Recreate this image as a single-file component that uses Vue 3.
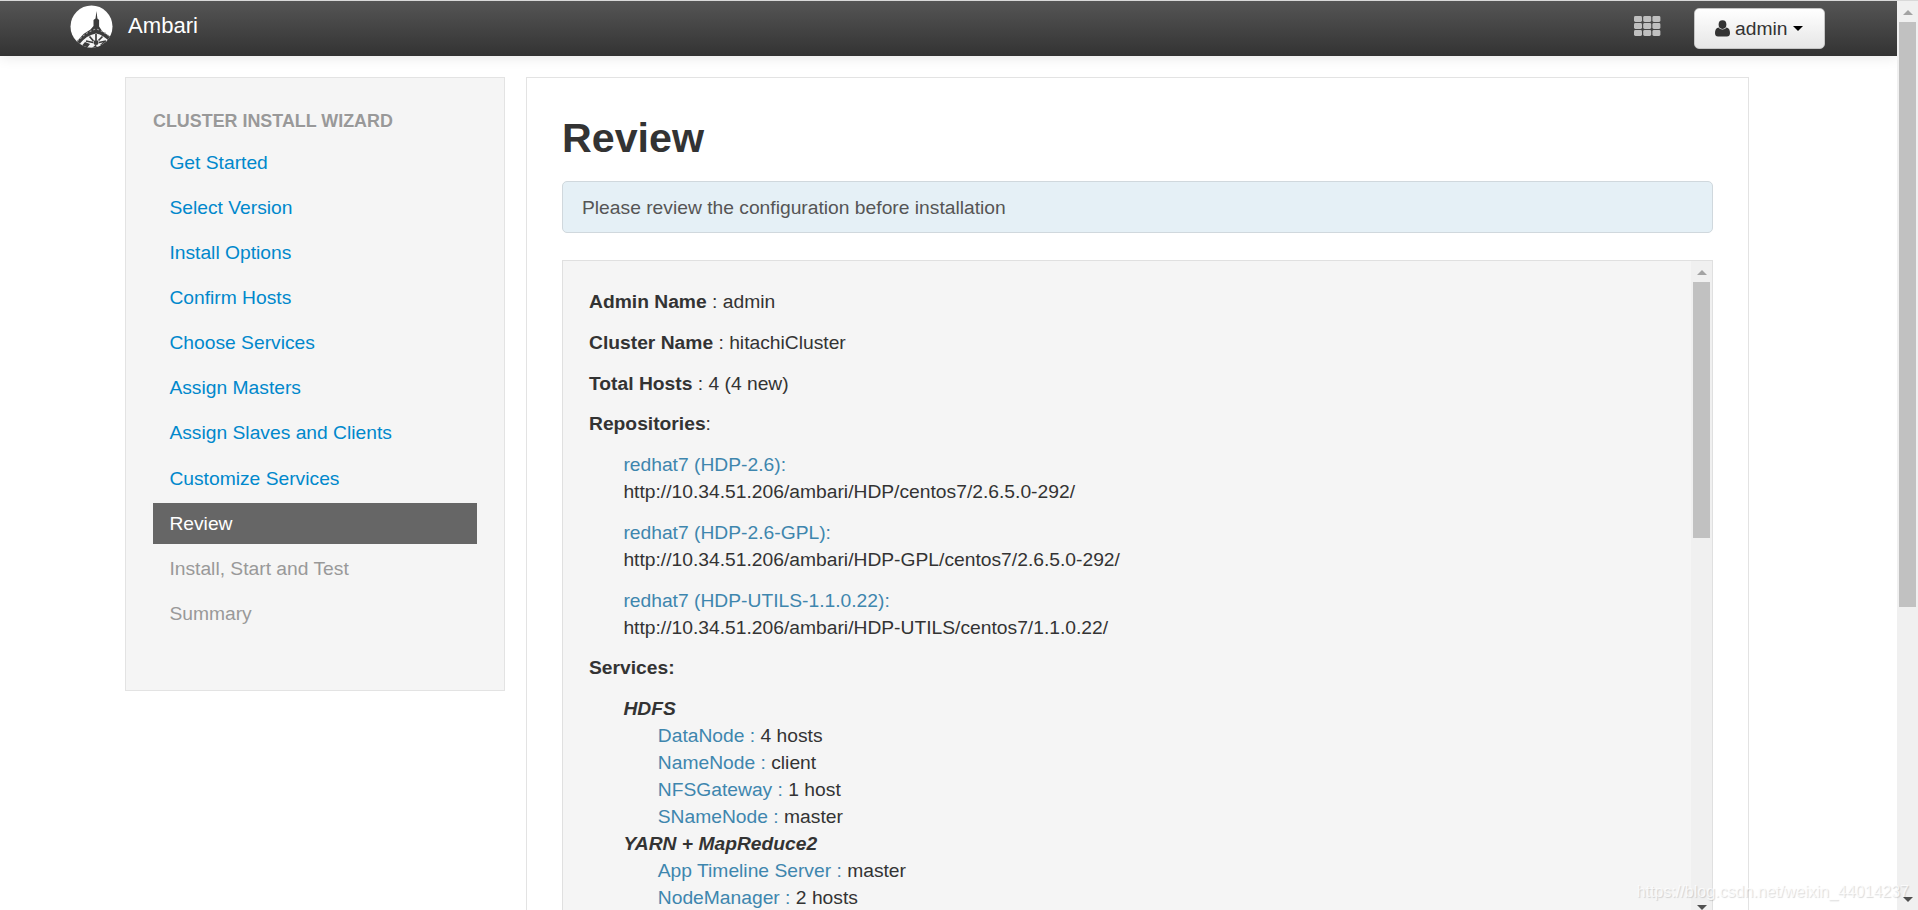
<template>
  <div class="page">
    <div class="viewport">
      <header class="navbar">
        <a class="brand">
          <svg class="logo" viewBox="0 0 43 43">
            <defs>
              <clipPath id="disc"><circle cx="21.5" cy="21.5" r="21" /></clipPath>
            </defs>
            <g clip-path="url(#disc)">
              <rect width="43" height="43" fill="#fff" />
              <path d="M26.500 6l.9 7.500 1.700 1.500v6.500l3.300 5 10.600 7v10H5v-5l8.500-9.500 7-4.500 3-3.500v-6l2-1.500z" fill="#3c3c3c" />
              <path d="M7 36.500q9-9.500 19-12.500 9 2.500 16 10" fill="none" stroke="#999" stroke-width="1.200" stroke-dasharray="2 2" />
              <path d="M10 38.500Q17 30 26 28.500 34 30 39.500 37L37 39 34 36.500 30 40 33 43H27L26 39.500 22 43H17L20 39 15 37 12 40.500z" fill="#f4f4f4" />
              <path d="M16 36l7 1.500M19.500 31.500l4 4.500M26 29v6M32.500 31.500l-4 4M36 36l-7 1.500" stroke="#3c3c3c" stroke-width="1.700" />
              <circle cx="26" cy="37.500" r="2.500" fill="#3c3c3c" />
            </g>
          </svg>
          <span>Ambari</span>
        </a>
        <div class="tools">
          <svg class="grid-icon" viewBox="0 0 27 20">
            <rect
              v-for="n in 9"
              :key="n"
              :x="((n - 1) % 3) * 9.2"
              :y="Math.floor((n - 1) / 3) * 7"
              width="8"
              height="6"
              rx="1.4"
            />
          </svg>
          <button class="user-btn">
            <svg class="user-icon" viewBox="0 0 15 17">
              <path d="M3.600 4.600a3.900 4.300 0 1 0 7.800 0a3.900 4.300 0 1 0-7.800 0zM3.400 7.600C.8 8.200 0 10.500 0 13.300 0 15.300 1.200 16.600 3 16.600h9c1.800 0 3-1.300 3-3.300 0-2.800-.8-5.100-3.400-5.700C10.500 8.900 9.200 9.600 7.500 9.600S4.500 8.900 3.400 7.600z" />
            </svg>
            admin
            <span class="caret"></span>
          </button>
        </div>
      </header>

      <div class="content">
        <aside class="sidebar">
          <div class="nav-header">CLUSTER INSTALL WIZARD</div>
          <ul class="nav">
            <li v-for="step in steps" :key="step.label" :class="step.state">{{ step.label }}</li>
          </ul>
        </aside>

        <main class="panel">
          <h2>Review</h2>
          <div class="alert">Please review the configuration before installation</div>
          <div class="well">
            <div class="well-body">
              <p v-for="item in summary" :key="item.name">
                <b>{{ item.name }}</b> : {{ item.value }}
              </p>
              <p><b>Repositories</b>:</p>
              <div class="indent">
                <p v-for="repo in repos" :key="repo.name">
                  <span class="label">{{ repo.name }}:</span><br />{{ repo.url }}
                </p>
              </div>
              <p><b>Services:</b></p>
              <div class="indent">
                <div v-for="service in services" :key="service.name">
                  <div class="service">{{ service.name }}</div>
                  <div v-for="c in service.components" :key="c.name" class="indent">
                    <span class="label">{{ c.name }} : </span>{{ c.value }}
                  </div>
                </div>
              </div>
            </div>
            <div class="scrollbar inner">
              <i class="up"></i>
              <div class="thumb"></div>
              <i class="down"></i>
            </div>
          </div>
        </main>
      </div>
    </div>
    <div class="scrollbar outer">
      <i class="up"></i>
      <div class="thumb"></div>
      <i class="down"></i>
    </div>
    <div class="watermark">https://blog.csdn.net/weixin_44014237</div>
  </div>
</template>

<script setup>
const steps = [
  { label: "Get Started", state: "done" },
  { label: "Select Version", state: "done" },
  { label: "Install Options", state: "done" },
  { label: "Confirm Hosts", state: "done" },
  { label: "Choose Services", state: "done" },
  { label: "Assign Masters", state: "done" },
  { label: "Assign Slaves and Clients", state: "done" },
  { label: "Customize Services", state: "done" },
  { label: "Review", state: "active" },
  { label: "Install, Start and Test", state: "disabled" },
  { label: "Summary", state: "disabled" },
];

const summary = [
  { name: "Admin Name", value: "admin" },
  { name: "Cluster Name", value: "hitachiCluster" },
  { name: "Total Hosts", value: "4 (4 new)" },
];

const repos = [
  { name: "redhat7 (HDP-2.6)", url: "http://10.34.51.206/ambari/HDP/centos7/2.6.5.0-292/" },
  { name: "redhat7 (HDP-2.6-GPL)", url: "http://10.34.51.206/ambari/HDP-GPL/centos7/2.6.5.0-292/" },
  { name: "redhat7 (HDP-UTILS-1.1.0.22)", url: "http://10.34.51.206/ambari/HDP-UTILS/centos7/1.1.0.22/" },
];

const services = [
  {
    name: "HDFS",
    components: [
      { name: "DataNode", value: "4 hosts" },
      { name: "NameNode", value: "client" },
      { name: "NFSGateway", value: "1 host" },
      { name: "SNameNode", value: "master" },
    ],
  },
  {
    name: "YARN + MapReduce2",
    components: [
      { name: "App Timeline Server", value: "master" },
      { name: "NodeManager", value: "2 hosts" },
    ],
  },
];
</script>

<style>
body {
  margin: 0;
  overflow: hidden;
}
</style>

<style scoped>
.page {
  position: relative;
  display: flex;
  height: 910px;
  box-sizing: border-box;
  border-top: 1px solid #d9d9d9;
  overflow: hidden;
  background: #fff;
  color: #333;
  font-family: "Liberation Sans", Arial, sans-serif;
  font-size: 19.25px;
  line-height: 27px;
}
.viewport {
  flex: 1;
  display: flex;
  flex-direction: column;
  min-width: 0;
}
.navbar {
  display: flex;
  flex: none;
  justify-content: space-between;
  height: 55px;
  padding: 0 72px 0 70px;
  background: linear-gradient(#555, #333);
  box-shadow: 0 1px 13px rgba(0, 0, 0, 0.1);
}
.brand {
  display: flex;
  gap: 15px;
  color: #fff;
  font-size: 22.1px;
  line-height: 49px;
}
.logo {
  width: 43px;
  height: 43px;
  margin-top: 4px;
}
.tools {
  display: flex;
  align-items: flex-start;
}
.grid-icon {
  width: 27px;
  height: 20px;
  margin: 15px 33px 0 0;
  fill: #bfbfbf;
}
.user-btn {
  display: flex;
  align-items: center;
  width: 131px;
  height: 41px;
  margin-top: 7px;
  padding: 0 0 0 20px;
  border: 1px solid #c5c5c5;
  border-radius: 5px;
  background: linear-gradient(#fff, #e6e6e6);
  color: #333;
  font: inherit;
}
.user-icon {
  width: 15px;
  height: 17px;
  margin-right: 5px;
  fill: #333;
}
.caret {
  margin-left: 6px;
  border: 5px solid transparent;
  border-top-color: #000;
  border-bottom: 0;
}
.content {
  display: flex;
  flex: 1;
  align-items: flex-start;
  gap: 21px;
  min-height: 0;
  padding: 21px 0 0 125px;
}
.sidebar {
  box-sizing: border-box;
  width: 380px;
  height: 614px;
  padding: 30px 27px 0;
  border: 1px solid #e3e3e3;
  background: #f5f5f5;
}
.nav-header {
  margin-bottom: 6.9px;
  color: #999;
  font-size: 17.9px;
  font-weight: bold;
  text-shadow: 0 1px 0 rgba(255, 255, 255, 0.5);
}
.nav {
  margin: 0;
  padding: 0;
  list-style: none;
}
.nav li {
  margin-bottom: 4.65px;
  padding: 6.75px 16.4px;
}
.nav .done {
  color: #08c;
}
.nav .active {
  background: #666;
  color: #fff;
}
.nav .disabled {
  color: #999;
}
.panel {
  display: flex;
  flex-direction: column;
  box-sizing: border-box;
  width: 1223px;
  height: 833px;
  padding: 33px 35px 0;
  border: 1px solid #e3e3e3;
  border-bottom: 0;
}
h2 {
  margin: 0 0 16px;
  font-size: 41.2px;
  line-height: 54px;
}
.alert {
  box-sizing: border-box;
  height: 52px;
  margin-bottom: 27px;
  padding: 12px 19px;
  border: 1px solid #d0d8dd;
  border-radius: 5px;
  background: #e5f0f6;
  color: #555;
}
.well {
  display: flex;
  flex: 1;
  min-height: 0;
  border: 1px solid #e0e0e0;
  border-bottom: 0;
  background: #f5f5f5;
  overflow: hidden;
}
.well-body {
  flex: 1;
  padding: 27px 26px 0;
}
p {
  margin: 0 0 13.75px;
}
.indent {
  margin-left: 34.4px;
}
.label {
  color: #3e86ae;
}
.service {
  font-style: italic;
  font-weight: bold;
}
.scrollbar {
  display: flex;
  flex-direction: column;
  flex: none;
  align-items: center;
  width: 21px;
  background: #f0f0f0;
}
.scrollbar i {
  border: 5px solid transparent;
}
.scrollbar .up {
  border-top: 0;
  border-bottom-color: #a3a3a3;
}
.scrollbar .down {
  margin-top: auto;
  border-bottom: 0;
  border-top-color: #505050;
}
.thumb {
  width: 17px;
  margin-top: 7px;
  background: #c1c1c1;
}
.inner {
  padding-top: 9px;
}
.inner .thumb {
  height: 256px;
}
.outer {
  padding: 9px 0 8px;
}
.outer .thumb {
  height: 585px;
}
.watermark {
  position: absolute;
  right: 9px;
  bottom: 5px;
  color: rgba(255, 255, 255, 0.75);
  font-size: 16px;
  text-shadow: 1px 1px 1px rgba(0, 0, 0, 0.15);
}
</style>
